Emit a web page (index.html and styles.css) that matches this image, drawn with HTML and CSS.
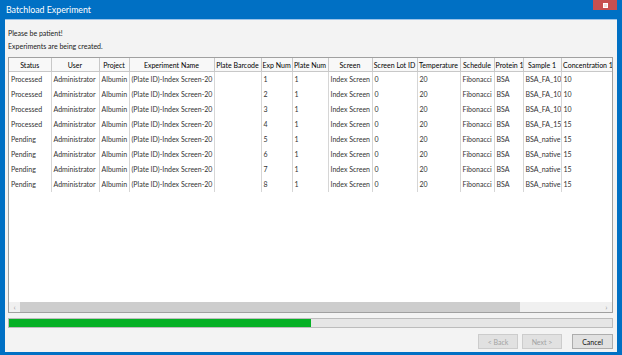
FILE: index.html
```html
<!DOCTYPE html>
<html lang="en">
<head>
    <meta charset="UTF-8">
    <title>Batchload Experiment</title>
    <link rel="stylesheet" href="styles.css">
</head>
<body>
    <div class="window">
        <div class="titlebar">
            <span class="title">Batchload Experiment</span>
            <button class="close-btn"><span class="close-icon"></span></button>
        </div>
        <div class="client">
            <div class="message">Please be patient!</div>
            <div class="message">Experiments are being created.</div>

            <div class="grid">
                <div class="grid-view">
                    <table class="exp-table">
                        <colgroup>
                            <col style="width:42px"><col style="width:48px"><col style="width:30px">
                            <col style="width:85px"><col style="width:47px"><col style="width:31px">
                            <col style="width:36px"><col style="width:44px"><col style="width:45px">
                            <col style="width:43px"><col style="width:34px"><col style="width:29px">
                            <col style="width:38px"><col style="width:54px">
                        </colgroup>
                        <thead>
                            <tr>
                                <th>Status</th><th>User</th><th>Project</th><th>Experiment Name</th>
                                <th>Plate Barcode</th><th>Exp Num</th><th>Plate Num</th><th>Screen</th>
                                <th>Screen Lot ID</th><th>Temperature</th><th>Schedule</th><th>Protein 1</th>
                                <th>Sample 1</th><th>Concentration 1</th>
                            </tr>
                        </thead>
                        <tbody id="rows"></tbody>
                    </table>
                </div>
                <div class="hscroll">
                    <span class="arrow">&lsaquo;</span>
                    <div class="track"><div class="thumb"></div></div>
                    <span class="arrow">&rsaquo;</span>
                </div>
            </div>

            <div class="progress"><div class="progress-fill"></div></div>

            <div class="buttons">
                <button class="btn" disabled>&lt; Back</button>
                <button class="btn" disabled>Next &gt;</button>
                <button class="btn cancel">Cancel</button>
            </div>
        </div>
    </div>

    <script>
        const experiments = [
            ["Processed", 1, "BSA_FA_10", 10],
            ["Processed", 2, "BSA_FA_10", 10],
            ["Processed", 3, "BSA_FA_10", 10],
            ["Processed", 4, "BSA_FA_15", 15],
            ["Pending", 5, "BSA_native", 15],
            ["Pending", 6, "BSA_native", 15],
            ["Pending", 7, "BSA_native", 15],
            ["Pending", 8, "BSA_native", 15]
        ];

        let rows = document.getElementById("rows");
        experiments.forEach(exp => {
            let tr = document.createElement("tr");
            let cells = [exp[0], "Administrator", "Albumin", "(Plate ID)-Index Screen-20", "",
                exp[1], 1, "Index Screen", 0, 20, "Fibonacci", "BSA", exp[2], exp[3]];
            tr.innerHTML = cells.map(c => `<td>${c}</td>`).join("");
            rows.appendChild(tr);
        });
    </script>
</body>
</html>
```

FILE: styles.css
```css
body {
    margin: 0;
    font-family: Lato, "Noto Sans", sans-serif;
    background: #0070c4;
}
.window {
    width: 622px;
    height: 355px;
    display: flex;
    flex-direction: column;
    background: #0070c4;
}
.titlebar {
    height: 19px;
    display: flex;
    align-items: flex-start;
    justify-content: space-between;
}
.title {
    color: #fff;
    font-size: 8.8px;
    padding: 4px 0 0 6px;
}
.close-btn {
    width: 24px;
    height: 10px;
    margin-right: 5px;
    border: none;
    padding: 0;
    background: #c75050;
    display: flex;
    align-items: center;
    justify-content: center;
}
.close-icon {
    width: 3px;
    height: 3px;
    border: 1px solid #fff;
    background: #f3dede;
}
.client {
    flex: 1;
    margin: 0 5px 3px 5px;
    background: #f3f3f3;
    border-top: 1px solid #9cc3e8;
    padding: 0 4px 0 3px;
    display: flex;
    flex-direction: column;
    font-size: 7px;
    color: #1a1a1a;
}
.message {
    height: 13px;
    line-height: 13px;
}
.message:first-child {
    margin-top: 7px;
}
.grid {
    margin-top: 4px;
    height: 256px;
    border: 1px solid #a0a0a0;
    background: #fff;
    display: flex;
    flex-direction: column;
    box-sizing: border-box;
}
.grid-view {
    flex: 1;
    overflow: hidden;
}
.exp-table {
    border-collapse: collapse;
    table-layout: fixed;
    width: 606px;
}
.exp-table th {
    height: 13px;
    font-weight: normal;
    color: #000;
    text-align: center;
    border: 1px solid #c8c8c8;
    border-top: none;
    background: #f8f8f8;
    white-space: nowrap;
    overflow: hidden;
    padding: 0 1px;
}
.exp-table th:first-child {
    border-left: none;
}
.exp-table td {
    height: 13px;
    padding: 0 2px 2px;
    color: #333;
    border-left: 1px solid #d6d6d6;
    border-right: 1px solid #d6d6d6;
    white-space: nowrap;
    overflow: hidden;
}
.exp-table td:first-child {
    border-left: none;
}
.hscroll {
    height: 10px;
    display: flex;
    align-items: center;
    background: #f0f0f0;
}
.arrow {
    width: 11px;
    text-align: center;
    color: #a0a0a0;
    font-size: 8px;
    line-height: 10px;
}
.track {
    flex: 1;
    height: 10px;
}
.thumb {
    width: 500px;
    height: 10px;
    background: #cdcdcd;
}
.progress {
    margin-top: 5px;
    height: 10px;
    border: 1px solid #bcbcbc;
    background: #e6e6e6;
    box-sizing: border-box;
}
.progress-fill {
    width: 302px;
    height: 100%;
    background: #06b025;
}
.buttons {
    margin-top: 6px;
    display: flex;
    justify-content: flex-end;
    gap: 4px;
}
.btn {
    width: 40px;
    height: 15px;
    padding: 0;
    font-family: inherit;
    font-size: 7px;
    background: #e1e1e1;
    border: 1px solid #cccccc;
    color: #a3a3a3;
}
.btn.cancel {
    width: 41px;
    margin-left: 6px;
    border-color: #adadad;
    color: #111;
}
```
